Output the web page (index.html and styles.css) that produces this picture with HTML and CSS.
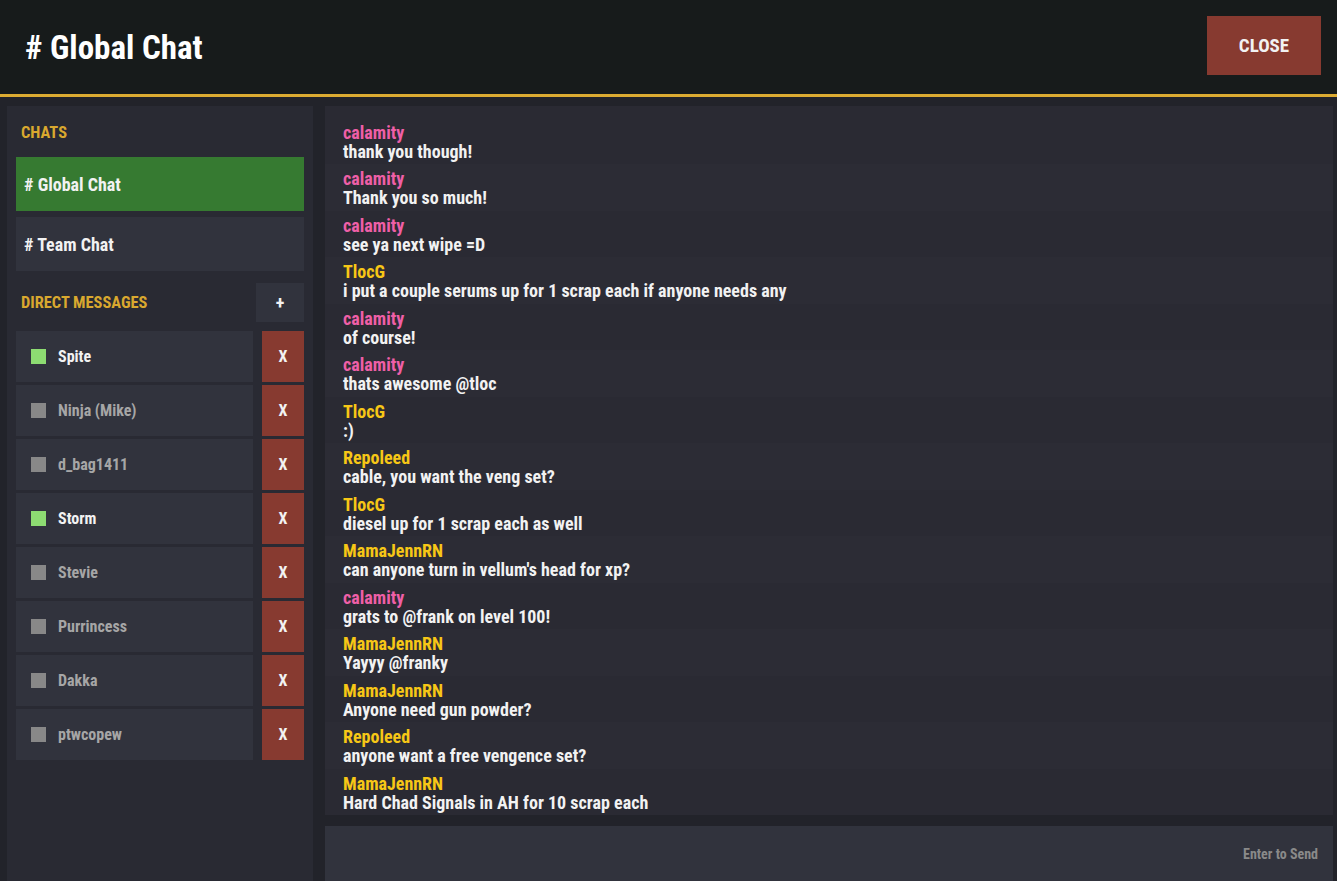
FILE: index.html
```html
<!DOCTYPE html>
<html lang="en">
<head>
  <meta charset="UTF-8" />
  <meta name="viewport" content="width=device-width, initial-scale=1.0" />
  <title>Global Chat</title>
  <link rel="stylesheet" href="styles.css">
</head>
<body>

  <div class="topbar">
    <h1># Global Chat</h1>
    <button class="close-button">CLOSE</button>
  </div>

  <div class="main">
    <div class="sidebar">
      <div class="section-title">CHATS</div>
      <div class="channel active"># Global Chat</div>
      <div class="channel"># Team Chat</div>

      <div class="dm-header">
        <span class="section-title">DIRECT MESSAGES</span>
        <button class="add-button">+</button>
      </div>

      <div class="dm-row">
        <div class="dm online"><span class="status"></span>Spite</div>
        <button class="remove-button">X</button>
      </div>
      <div class="dm-row">
        <div class="dm"><span class="status"></span>Ninja (Mike)</div>
        <button class="remove-button">X</button>
      </div>
      <div class="dm-row">
        <div class="dm"><span class="status"></span>d_bag1411</div>
        <button class="remove-button">X</button>
      </div>
      <div class="dm-row">
        <div class="dm online"><span class="status"></span>Storm</div>
        <button class="remove-button">X</button>
      </div>
      <div class="dm-row">
        <div class="dm"><span class="status"></span>Stevie</div>
        <button class="remove-button">X</button>
      </div>
      <div class="dm-row">
        <div class="dm"><span class="status"></span>Purrincess</div>
        <button class="remove-button">X</button>
      </div>
      <div class="dm-row">
        <div class="dm"><span class="status"></span>Dakka</div>
        <button class="remove-button">X</button>
      </div>
      <div class="dm-row">
        <div class="dm"><span class="status"></span>ptwcopew</div>
        <button class="remove-button">X</button>
      </div>
    </div>

    <div class="chat">
      <div class="messages">
        <div class="message"><div class="author pink">calamity</div><div class="text">thank you though!</div></div>
        <div class="message"><div class="author pink">calamity</div><div class="text">Thank you so much!</div></div>
        <div class="message"><div class="author pink">calamity</div><div class="text">see ya next wipe =D</div></div>
        <div class="message"><div class="author">TlocG</div><div class="text">i put a couple serums up for 1 scrap each if anyone needs any</div></div>
        <div class="message"><div class="author pink">calamity</div><div class="text">of course!</div></div>
        <div class="message"><div class="author pink">calamity</div><div class="text">thats awesome @tloc</div></div>
        <div class="message"><div class="author">TlocG</div><div class="text">:)</div></div>
        <div class="message"><div class="author">Repoleed</div><div class="text">cable, you want the veng set?</div></div>
        <div class="message"><div class="author">TlocG</div><div class="text">diesel up for 1 scrap each as well</div></div>
        <div class="message"><div class="author">MamaJennRN</div><div class="text">can anyone turn in vellum's head for xp?</div></div>
        <div class="message"><div class="author pink">calamity</div><div class="text">grats to @frank on level 100!</div></div>
        <div class="message"><div class="author">MamaJennRN</div><div class="text">Yayyy @franky</div></div>
        <div class="message"><div class="author">MamaJennRN</div><div class="text">Anyone need gun powder?</div></div>
        <div class="message"><div class="author">Repoleed</div><div class="text">anyone want a free vengence set?</div></div>
        <div class="message"><div class="author">MamaJennRN</div><div class="text">Hard Chad Signals in AH for 10 scrap each</div></div>
      </div>
      <div class="composer">
        <input type="text" class="chat-input" />
        <span class="hint">Enter to Send</span>
      </div>
    </div>
  </div>

</body>
</html>
```

FILE: styles.css
```css
* {
  box-sizing: border-box;
}

body {
  font-family: "Roboto Condensed", "Liberation Sans Narrow", Roboto, sans-serif;
  font-stretch: condensed;
  font-weight: bold;
  background-color: #22232a;
  color: #f2f2f2;
  margin: 0;
  height: 100vh;
  display: flex;
  flex-direction: column;
  overflow: hidden;
}

button {
  font-family: inherit;
  font-weight: bold;
  border: none;
  color: #f2f2f2;
  cursor: pointer;
}

.topbar {
  height: 97px;
  background-color: #171b1b;
  border-bottom: 3px solid #dcab32;
  display: flex;
  justify-content: space-between;
  align-items: flex-start;
  padding: 16px 16px 0 25px;
  flex-shrink: 0;
}

.topbar h1 {
  margin: 12px 0 0;
  font-size: 33px;
  color: #fff;
}

.close-button {
  width: 114px;
  height: 59px;
  background-color: #873a30;
  font-size: 19px;
}

.main {
  flex: 1;
  display: flex;
  gap: 12px;
  padding: 9px 4px 0 7px;
  min-height: 0;
}

.sidebar {
  width: 306px;
  background-color: #292a33;
  padding: 17px 9px 0 9px;
}

.section-title {
  color: #d9a82f;
  font-size: 16.4px;
  display: block;
  padding-left: 5px;
  margin-bottom: 15px;
}

.channel {
  height: 54px;
  background-color: #31333d;
  font-size: 18px;
  display: flex;
  align-items: center;
  padding-left: 8px;
  margin-bottom: 6px;
}

.channel.active {
  background-color: #367a31;
}

.dm-header {
  display: flex;
  justify-content: space-between;
  align-items: center;
  margin-top: 12px;
  margin-bottom: 9px;
}

.dm-header .section-title {
  margin-bottom: 0;
}

.add-button {
  width: 48px;
  height: 39px;
  background-color: #31333d;
  font-size: 18px;
}

.dm-row {
  display: flex;
  gap: 9px;
  height: 51px;
  margin-bottom: 3px;
}

.dm {
  flex: 1;
  background-color: #31333d;
  display: flex;
  align-items: center;
  padding-left: 15px;
  font-size: 16px;
  color: #a6a6a6;
}

.dm.online {
  color: #f2f2f2;
}

.status {
  width: 15px;
  height: 15px;
  background-color: #888888;
  margin-right: 12px;
}

.dm.online .status {
  background-color: #8ddc72;
}

.remove-button {
  width: 42px;
  background-color: #873a30;
  font-size: 16px;
}

.chat {
  flex: 1;
  display: flex;
  flex-direction: column;
  gap: 11px;
}

.messages {
  flex: 1;
  background-color: #2a2a33;
  display: flex;
  flex-direction: column;
  justify-content: flex-end;
  overflow: hidden;
}

.message {
  padding: 5px 18px 3px 18px;
  font-size: 18px;
}

.message:nth-child(even) {
  background-color: #2c2c35;
}

.author {
  color: #f7c716;
  line-height: 19px;
}

.author.pink {
  color: #ef5fa7;
}

.text {
  line-height: 19.5px;
}

.composer {
  height: 55px;
  background-color: #31333d;
  display: flex;
  align-items: center;
  padding-right: 15px;
}

.chat-input {
  flex: 1;
  height: 100%;
  background: transparent;
  border: none;
  outline: none;
  color: #f2f2f2;
  font-family: inherit;
  font-size: 16px;
  padding: 0 18px;
}

.hint {
  color: #8a8a8a;
  font-size: 14px;
}
```
